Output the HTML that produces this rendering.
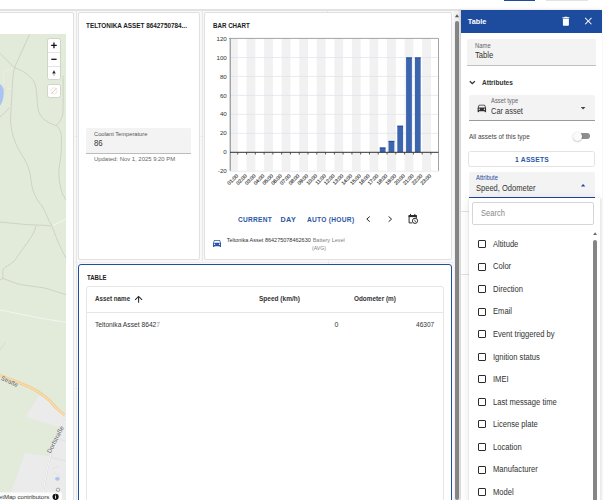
<!DOCTYPE html>
<html><head><meta charset="utf-8">
<style>
*{box-sizing:border-box;margin:0;padding:0}
html,body{width:603px;height:500px;overflow:hidden;background:#fff;font-family:"Liberation Sans",sans-serif;color:#222}
.a{position:absolute}
svg{font-family:"Liberation Sans",sans-serif}
#grid{left:0;top:9px;width:461px;height:491px;background:#f8f8f8;border-top:2px solid #e2e2e2}
.card{position:absolute;background:#fff;border:1px solid #e0e0e0;border-radius:2px}
.title{position:absolute;font-weight:bold;font-size:7px;color:#222;white-space:nowrap;transform-origin:0 0;transform:scaleX(.91);line-height:8px}
.t{position:absolute;white-space:nowrap;line-height:1}
.fld{position:absolute;background:#f3f3f3;border-bottom:1px solid #9a9a9a;border-radius:2px 2px 0 0}
.item{position:absolute;left:477.8px;width:8.1px;height:8.1px;border:1.4px solid #2b2b2b;border-radius:1px}
.itxt{position:absolute;left:493.3px;font-size:8.45px;transform-origin:0 0;transform:scaleX(.9);color:#333;white-space:nowrap;line-height:1}
</style></head><body>
<!-- top strip -->
<div class="a" style="left:504px;top:0;width:31px;height:1px;background:#1d4b9e"></div>
<div class="a" style="left:546px;top:0;width:41.5px;height:1px;background:#e3e3e3"></div>
<div class="a" id="grid"></div>
<!-- grid lines of editor -->
<div class="a" style="left:75.5px;top:11px;width:1px;height:489px;background:#e6e6e6"></div>
<div class="a" style="left:201.5px;top:11px;width:1px;height:250px;background:#e6e6e6"></div>
<div class="a" style="left:0;top:261.6px;width:454px;height:1px;background:#efefef"></div>
<div class="a" style="left:327.6px;top:259.5px;width:1px;height:5px;background:#ebebeb"></div>
<div class="a" style="left:327px;top:10.6px;width:1px;height:2px;background:#e2e2e2"></div>
<div class="a" style="left:73.5px;top:135.9px;width:5px;height:1px;background:#ebebeb"></div>
<div class="a" style="left:199.8px;top:135.9px;width:4.6px;height:1px;background:#ebebeb"></div>
<div class="a" style="left:73.5px;top:387.6px;width:5px;height:1px;background:#ebebeb"></div>

<!-- map card -->
<div class="card" style="left:-3px;top:12px;width:77px;height:492px"></div>
<div class="a" style="left:0;top:34px;width:66px;height:466px;background:#e2eada;overflow:hidden">
<svg width="66" height="466" viewBox="0 34 66 466" style="display:block">
<g fill="none" stroke="#c9cbc2" stroke-width="0.8" stroke-linecap="round" stroke-linejoin="round">
<path d="M29.7 34 L14.4 67.8"/>
<path d="M0 53.4 L14.4 67.8"/>
<path d="M14.4 67.8 C22 70 30 75 34.2 82 C37 88 37 100 37.6 106 C38.5 114 42 118.8 48 122 C51 124 54 125 56.5 125.5"/>
<path d="M63 76 C63.5 90 63 104 63 113 C62 119 59 123 56.5 125.5"/>
<path d="M14.4 67.8 C13 74 12.6 80 12.2 90 C11.6 100 10.8 110 10.5 120 C11 134 16 146 22 155 C27 163 30 170 31 180 C32 190 35 198 42 206 C46 212 48 220 52 226"/>
<path d="M56.5 125.5 C59 128 61 131 61.4 136 C61.6 145 61.5 155 59.5 165 C58 172 59 185 63 195 L66 200"/>
<path d="M0 117 C3 114 6 112 9 108"/>
<path d="M0 222 C12 223 26 225 37 225 C44 225 48 226 52 226"/>
<path d="M52 226 C55 234 59 246 66 258"/>
<path d="M36 226 C35 230 33 234 30.4 238.4 L14.4 260.8 C10 265 5 267 3.2 269 C2.5 272 3 276 3 278.4 L0 280"/>
<path d="M3 278.4 C10 281 16 284 22.4 284.8 C30 286 38 287 44.8 288 C52 290 60 293 66 294.6"/>
<path d="M0 350 L5 343" stroke="#d2d4cc" stroke-width="0.6"/>
</g>
<path d="M52 226 L66 219" stroke="#f4f6f0" stroke-width="1" fill="none"/>
<path d="M0 310 C12 312 24 315 35 317 C46 319 56 321 66 322" stroke="#f2f4ee" stroke-width="1.1" fill="none"/>
<!-- lake -->
<path d="M0 84 C3 86 4 89 3.8 93 C3.5 99 2 103 0 106 Z" fill="#a9c4f0"/>
<circle cx="5.4" cy="88.5" r="1.5" fill="#f0dcc0" opacity=".8"/>
<path d="M6 88.3 L11 88.3 M3.6 72.3 V84 M3.6 72.3 C8 70 11 69 14.4 67.8" stroke="#eef0ea" stroke-width="0.7" fill="none"/>
<!-- grey areas -->
<path d="M39 395 L55 405 L66 413 L66 421 L58 427 L25.5 417 Z" fill="#ebebeb"/>
<path d="M66 414 L66 500 L42 500 L44 488 L46 474 L49 460 L53 446 L57 434 L62 424 Z" fill="#ebebeb"/>
<path d="M25 453 L51 456.5 L49 470 L46 490 L45 500 L8 500 Z" fill="#ebebeb"/>
<!-- yellow road -->
<path d="M0 375.2 C8 378.5 20 383 30 387.3 C40 392 48 398 55 406.5 C59 410.5 62 413 66 416" stroke="#e6c58c" stroke-width="2.8" fill="none"/>
<path d="M0 375.2 C8 378.5 20 383 30 387.3 C40 392 48 398 55 406.5 C59 410.5 62 413 66 416" stroke="#fcdba2" stroke-width="1.8" fill="none"/>
<!-- dorfstrasse -->
<path d="M66 414 C62 424 57 434 53 446 C49 460 46 474 44 488 L42 500" stroke="#d6d6d6" stroke-width="1.6" fill="none"/>
<path d="M66 414 C62 424 57 434 53 446 C49 460 46 474 44 488 L42 500" stroke="#fafafa" stroke-width="0.9" fill="none"/>
<path d="M52 438 L66 441 M51 457.5 L66 461 M52 469 L59 466 M53 472 L60 477" stroke="#d8d8d8" stroke-width="0.5" fill="none"/>
<ellipse cx="57.4" cy="478.8" rx="2.3" ry="1.9" fill="#a9c4f0"/>
<text transform="translate(0.6,379.6) rotate(25)" font-size="5.9" fill="#555" stroke="#f4f2ea" stroke-width="0.9" paint-order="stroke" stroke-opacity=".6">Straße</text>
<text transform="translate(50.6,453.8) rotate(-63)" font-size="6.3" fill="#5c5c5c" stroke="#f4f4f4" stroke-width="0.9" paint-order="stroke" stroke-opacity=".7">Dorfstraße</text>
<circle cx="58" cy="489.8" r="1.7" fill="none" stroke="#888" stroke-width="0.7"/>
<rect x="0" y="492.4" width="62" height="7.6" fill="#fff" opacity=".85"/>
<text x="-1.2" y="499.3" font-size="6.1" fill="#333">etMap contributors</text>
<circle cx="55.6" cy="496.8" r="3.1" fill="#111"/>
<rect x="55.15" y="496" width="0.9" height="2.6" fill="#fff"/>
<rect x="55.15" y="494.6" width="0.9" height="0.9" fill="#fff"/>
</svg>

</div>
<!-- map controls -->
<div class="a" style="left:46.6px;top:38.3px;width:14.7px;height:41.5px;background:#fff;border:1px solid #cfd6c8;border-radius:2.5px"></div>
<div class="a" style="left:47.6px;top:52.3px;width:12.7px;height:0.6px;background:#e4e4e4"></div>
<div class="a" style="left:47.6px;top:66px;width:12.7px;height:0.6px;background:#e4e4e4"></div>
<div class="a" style="left:46.6px;top:83.8px;width:14.7px;height:14.2px;background:#fff;border:1px solid #cfd6c8;border-radius:2.5px"></div>
<svg class="a" style="left:0;top:0" width="603" height="500">
  <path d="M53.95 42.6 V48.2 M51.15 45.4 H56.75" stroke="#111" stroke-width="1.3"/>
  <path d="M51.3 59.3 H56.6" stroke="#111" stroke-width="1.3"/>
  <path d="M53.95 70.2 L52.2 73.6 H55.7 Z" fill="#222"/>
  <path d="M53.95 76.6 L52.6 74.2 H55.3 Z" fill="#bbb"/>
  <circle cx="54" cy="90.9" r="3.1" fill="none" stroke="#ddd" stroke-width="0.6"/>
  <path d="M51.6 93.6 L56.4 88.2" stroke="#f0b985" stroke-width="0.8"/>
</svg>

<!-- teltonika card -->
<div class="card" style="left:78.3px;top:12px;width:121.5px;height:247.5px"></div>
<div class="title" style="left:86.4px;top:22px">TELTONIKA ASSET 8642750784...</div>
<div class="fld" style="left:86.4px;top:127.6px;width:105px;height:26.2px;border-bottom:1.2px solid #bcbcbc"></div>
<div class="t" style="left:93.9px;top:131px;font-size:6px;transform-origin:0 0;transform:scaleX(0.954);color:#555">Coolant Temperature</div>
<div class="t" style="left:93.9px;top:140.3px;font-size:8.2px;transform-origin:0 0;transform:scaleX(0.956);color:#333">86</div>
<div class="t" style="left:93.9px;top:155.5px;font-size:6px;transform-origin:0 0;transform:scaleX(0.985);color:#666">Updated: Nov 1, 2025 9:20 PM</div>

<!-- bar chart card -->
<div class="card" style="left:204.3px;top:12px;width:247.4px;height:247.5px"></div>
<div class="title" style="left:212.8px;top:22px;transform:scaleX(.885)">BAR CHART</div>
<svg class="a" style="left:0;top:0" width="603" height="500" viewBox="0 0 603 500">
<rect x="230.70" y="38.40" width="7.08" height="132.40" fill="#f1f1f1"/>
<rect x="246.56" y="38.40" width="8.78" height="132.40" fill="#f1f1f1"/>
<rect x="264.12" y="38.40" width="8.78" height="132.40" fill="#f1f1f1"/>
<rect x="281.68" y="38.40" width="8.78" height="132.40" fill="#f1f1f1"/>
<rect x="299.24" y="38.40" width="8.78" height="132.40" fill="#f1f1f1"/>
<rect x="316.80" y="38.40" width="8.78" height="132.40" fill="#f1f1f1"/>
<rect x="334.36" y="38.40" width="8.78" height="132.40" fill="#f1f1f1"/>
<rect x="351.92" y="38.40" width="8.78" height="132.40" fill="#f1f1f1"/>
<rect x="369.48" y="38.40" width="8.78" height="132.40" fill="#f1f1f1"/>
<rect x="387.04" y="38.40" width="8.78" height="132.40" fill="#f1f1f1"/>
<rect x="404.60" y="38.40" width="8.78" height="132.40" fill="#f1f1f1"/>
<rect x="422.16" y="38.40" width="8.78" height="132.40" fill="#f1f1f1"/>
<line x1="230" x2="438.5" y1="171.26" y2="171.26" stroke="#dfe3ef" stroke-width="0.7"/>
<line x1="230" x2="438.5" y1="133.34" y2="133.34" stroke="#dfe3ef" stroke-width="0.7"/>
<line x1="230" x2="438.5" y1="114.38" y2="114.38" stroke="#dfe3ef" stroke-width="0.7"/>
<line x1="230" x2="438.5" y1="95.42" y2="95.42" stroke="#dfe3ef" stroke-width="0.7"/>
<line x1="230" x2="438.5" y1="76.46" y2="76.46" stroke="#dfe3ef" stroke-width="0.7"/>
<line x1="230" x2="438.5" y1="57.50" y2="57.50" stroke="#dfe3ef" stroke-width="0.7"/>
<rect x="379.75" y="147.56" width="5.8" height="4.74" fill="#3c65b0"/>
<rect x="379.75" y="147.56" width="5.8" height="0.9" fill="#23488f"/>
<rect x="388.53" y="140.92" width="5.8" height="11.38" fill="#3c65b0"/>
<rect x="388.53" y="140.92" width="5.8" height="0.9" fill="#23488f"/>
<rect x="397.31" y="125.76" width="5.8" height="26.54" fill="#3c65b0"/>
<rect x="397.31" y="125.76" width="5.8" height="0.9" fill="#23488f"/>
<rect x="406.09" y="57.50" width="5.8" height="94.80" fill="#3c65b0"/>
<rect x="406.09" y="57.50" width="5.8" height="0.9" fill="#23488f"/>
<rect x="414.87" y="57.50" width="5.8" height="94.80" fill="#3c65b0"/>
<rect x="414.87" y="57.50" width="5.8" height="0.9" fill="#23488f"/>
<line x1="229.0" x2="438.5" y1="38.4" y2="38.4" stroke="#9a9a9a" stroke-width="0.9"/>
<line x1="438.5" x2="438.5" y1="38.4" y2="170.8" stroke="#9a9a9a" stroke-width="0.9"/>
<line x1="230.2" x2="230.2" y1="38.4" y2="170.8" stroke="#7d7d7d" stroke-width="1"/>
<line x1="230" x2="438.5" y1="152.3" y2="152.3" stroke="#333" stroke-width="1"/>
<line x1="237.78" x2="237.78" y1="152.3" y2="154.50" stroke="#333" stroke-width="0.8"/>
<line x1="246.56" x2="246.56" y1="152.3" y2="154.50" stroke="#333" stroke-width="0.8"/>
<line x1="255.34" x2="255.34" y1="152.3" y2="154.50" stroke="#333" stroke-width="0.8"/>
<line x1="264.12" x2="264.12" y1="152.3" y2="154.50" stroke="#333" stroke-width="0.8"/>
<line x1="272.90" x2="272.90" y1="152.3" y2="154.50" stroke="#333" stroke-width="0.8"/>
<line x1="281.68" x2="281.68" y1="152.3" y2="154.50" stroke="#333" stroke-width="0.8"/>
<line x1="290.46" x2="290.46" y1="152.3" y2="154.50" stroke="#333" stroke-width="0.8"/>
<line x1="299.24" x2="299.24" y1="152.3" y2="154.50" stroke="#333" stroke-width="0.8"/>
<line x1="308.02" x2="308.02" y1="152.3" y2="154.50" stroke="#333" stroke-width="0.8"/>
<line x1="316.80" x2="316.80" y1="152.3" y2="154.50" stroke="#333" stroke-width="0.8"/>
<line x1="325.58" x2="325.58" y1="152.3" y2="154.50" stroke="#333" stroke-width="0.8"/>
<line x1="334.36" x2="334.36" y1="152.3" y2="154.50" stroke="#333" stroke-width="0.8"/>
<line x1="343.14" x2="343.14" y1="152.3" y2="154.50" stroke="#333" stroke-width="0.8"/>
<line x1="351.92" x2="351.92" y1="152.3" y2="154.50" stroke="#333" stroke-width="0.8"/>
<line x1="360.70" x2="360.70" y1="152.3" y2="154.50" stroke="#333" stroke-width="0.8"/>
<line x1="369.48" x2="369.48" y1="152.3" y2="154.50" stroke="#333" stroke-width="0.8"/>
<line x1="378.26" x2="378.26" y1="152.3" y2="154.50" stroke="#333" stroke-width="0.8"/>
<line x1="387.04" x2="387.04" y1="152.3" y2="154.50" stroke="#333" stroke-width="0.8"/>
<line x1="395.82" x2="395.82" y1="152.3" y2="154.50" stroke="#333" stroke-width="0.8"/>
<line x1="404.60" x2="404.60" y1="152.3" y2="154.50" stroke="#333" stroke-width="0.8"/>
<line x1="413.38" x2="413.38" y1="152.3" y2="154.50" stroke="#333" stroke-width="0.8"/>
<line x1="422.16" x2="422.16" y1="152.3" y2="154.50" stroke="#333" stroke-width="0.8"/>
<line x1="430.94" x2="430.94" y1="152.3" y2="154.50" stroke="#333" stroke-width="0.8"/>
<text x="226.8" y="173.36" text-anchor="end" font-size="6.2" fill="#333">-20</text>
<text x="226.8" y="154.40" text-anchor="end" font-size="6.2" fill="#333">0</text>
<text x="226.8" y="135.44" text-anchor="end" font-size="6.2" fill="#333">20</text>
<text x="226.8" y="116.48" text-anchor="end" font-size="6.2" fill="#333">40</text>
<text x="226.8" y="97.52" text-anchor="end" font-size="6.2" fill="#333">60</text>
<text x="226.8" y="78.56" text-anchor="end" font-size="6.2" fill="#333">80</text>
<text x="226.8" y="59.60" text-anchor="end" font-size="6.2" fill="#333">100</text>
<text x="226.8" y="40.64" text-anchor="end" font-size="6.2" fill="#333">120</text>
<text transform="translate(238.39,176.2) rotate(-45)" text-anchor="end" font-size="5.1" fill="#333" stroke="#333" stroke-width="0.14">01:00</text>
<text transform="translate(247.17,176.2) rotate(-45)" text-anchor="end" font-size="5.1" fill="#333" stroke="#333" stroke-width="0.14">02:00</text>
<text transform="translate(255.95,176.2) rotate(-45)" text-anchor="end" font-size="5.1" fill="#333" stroke="#333" stroke-width="0.14">03:00</text>
<text transform="translate(264.73,176.2) rotate(-45)" text-anchor="end" font-size="5.1" fill="#333" stroke="#333" stroke-width="0.14">04:00</text>
<text transform="translate(273.51,176.2) rotate(-45)" text-anchor="end" font-size="5.1" fill="#333" stroke="#333" stroke-width="0.14">05:00</text>
<text transform="translate(282.29,176.2) rotate(-45)" text-anchor="end" font-size="5.1" fill="#333" stroke="#333" stroke-width="0.14">06:00</text>
<text transform="translate(291.07,176.2) rotate(-45)" text-anchor="end" font-size="5.1" fill="#333" stroke="#333" stroke-width="0.14">07:00</text>
<text transform="translate(299.85,176.2) rotate(-45)" text-anchor="end" font-size="5.1" fill="#333" stroke="#333" stroke-width="0.14">08:00</text>
<text transform="translate(308.63,176.2) rotate(-45)" text-anchor="end" font-size="5.1" fill="#333" stroke="#333" stroke-width="0.14">09:00</text>
<text transform="translate(317.41,176.2) rotate(-45)" text-anchor="end" font-size="5.1" fill="#333" stroke="#333" stroke-width="0.14">10:00</text>
<text transform="translate(326.19,176.2) rotate(-45)" text-anchor="end" font-size="5.1" fill="#333" stroke="#333" stroke-width="0.14">11:00</text>
<text transform="translate(334.97,176.2) rotate(-45)" text-anchor="end" font-size="5.1" fill="#333" stroke="#333" stroke-width="0.14">12:00</text>
<text transform="translate(343.75,176.2) rotate(-45)" text-anchor="end" font-size="5.1" fill="#333" stroke="#333" stroke-width="0.14">13:00</text>
<text transform="translate(352.53,176.2) rotate(-45)" text-anchor="end" font-size="5.1" fill="#333" stroke="#333" stroke-width="0.14">14:00</text>
<text transform="translate(361.31,176.2) rotate(-45)" text-anchor="end" font-size="5.1" fill="#333" stroke="#333" stroke-width="0.14">15:00</text>
<text transform="translate(370.09,176.2) rotate(-45)" text-anchor="end" font-size="5.1" fill="#333" stroke="#333" stroke-width="0.14">16:00</text>
<text transform="translate(378.87,176.2) rotate(-45)" text-anchor="end" font-size="5.1" fill="#333" stroke="#333" stroke-width="0.14">17:00</text>
<text transform="translate(387.65,176.2) rotate(-45)" text-anchor="end" font-size="5.1" fill="#333" stroke="#333" stroke-width="0.14">18:00</text>
<text transform="translate(396.43,176.2) rotate(-45)" text-anchor="end" font-size="5.1" fill="#333" stroke="#333" stroke-width="0.14">19:00</text>
<text transform="translate(405.21,176.2) rotate(-45)" text-anchor="end" font-size="5.1" fill="#333" stroke="#333" stroke-width="0.14">20:00</text>
<text transform="translate(413.99,176.2) rotate(-45)" text-anchor="end" font-size="5.1" fill="#333" stroke="#333" stroke-width="0.14">21:00</text>
<text transform="translate(422.77,176.2) rotate(-45)" text-anchor="end" font-size="5.1" fill="#333" stroke="#333" stroke-width="0.14">22:00</text>
<text transform="translate(431.55,176.2) rotate(-45)" text-anchor="end" font-size="5.1" fill="#333" stroke="#333" stroke-width="0.14">23:00</text>
</svg>
<div class="t" style="left:237.5px;top:215.6px;font-size:7.2px;font-weight:bold;color:#2a56a6;letter-spacing:.3px;transform-origin:0 0;transform:scaleX(.915)">CURRENT</div>
<div class="t" style="left:280.6px;top:215.6px;font-size:7.2px;font-weight:bold;color:#2a56a6;letter-spacing:.3px">DAY</div>
<div class="t" style="left:306.9px;top:215.6px;font-size:7.2px;font-weight:bold;color:#2a56a6;letter-spacing:.3px;transform-origin:0 0;transform:scaleX(.92)">AUTO (HOUR)</div>
<svg class="a" style="left:0;top:0" width="603" height="500">
  <path d="M369.8 216.5 L366.8 219.1 L369.8 221.7" fill="none" stroke="#2b2b2b" stroke-width="1"/>
  <path d="M388.6 216.5 L391.6 219.1 L388.6 221.7" fill="none" stroke="#2b2b2b" stroke-width="1"/>
  <!-- calendar clock -->
  <path d="M412.3 222.9 H409.1 V215.6 H416.3 V218" fill="none" stroke="#2b2b2b" stroke-width="1"/>
  <rect x="408.6" y="215.1" width="8.2" height="2" fill="#2b2b2b"/>
  <rect x="410" y="213.9" width="1" height="1.6" fill="#2b2b2b"/>
  <rect x="414.3" y="213.9" width="1" height="1.6" fill="#2b2b2b"/>
  <circle cx="415" cy="220.8" r="2.6" fill="#fff" stroke="#2b2b2b" stroke-width="1"/>
  <path d="M414.8 219.6 V221 L416 221.8" fill="none" stroke="#2b2b2b" stroke-width="0.7"/>
  <!-- legend car -->
  <path transform="translate(211.7,237.8) scale(0.444)" d="M18.92 6.01C18.72 5.42 18.16 5 17.5 5h-11c-.66 0-1.21.42-1.42 1.01L3 12v8c0 .55.45 1 1 1h1c.55 0 1-.45 1-1v-1h12v1c0 .55.45 1 1 1h1c.55 0 1-.45 1-1v-8l-2.08-5.99zM6.5 16c-.83 0-1.5-.67-1.5-1.5S5.67 13 6.5 13s1.5.67 1.5 1.5S7.33 16 6.5 16zm11 0c-.83 0-1.5-.67-1.5-1.5s.67-1.5 1.5-1.5 1.5.67 1.5 1.5-.67 1.5-1.5 1.5zM5 11l1.5-4.5h11L19 11H5z" fill="#2a56a6"/>
</svg>
<div class="t" style="left:226.7px;top:238.1px;font-size:5.5px;color:#333">Teltonika Asset 864275078462630</div>
<div class="t" style="left:312.7px;top:238.1px;font-size:5.5px;color:#808080">Battery Level</div>
<div class="t" style="left:312px;top:246.2px;font-size:5.2px;color:#808080">(AVG)</div>

<!-- table card -->
<div class="card" style="left:78.4px;top:264.4px;width:373.6px;height:250px;border:1px solid #1f4d9f;border-radius:3px"></div>
<div class="title" style="left:86.6px;top:274px;transform:scaleX(.86)">TABLE</div>
<div class="a" style="left:86.3px;top:285.8px;width:357.5px;height:230px;border:1px solid #e6e6e6;border-radius:3px;background:#fff"></div>
<div class="a" style="left:86.8px;top:312px;width:356.5px;height:1px;background:#e6e6e6"></div>
<div class="t" style="left:94.6px;top:295.8px;font-size:6.6px;font-weight:bold;transform-origin:0 0;transform:scaleX(0.949);color:#333">Asset name</div>
<svg class="a" style="left:0;top:0" width="603" height="500">
  <path d="M138.6 302.8 V296.8 M135.1 299.9 L138.6 296.4 L142.1 299.9" fill="none" stroke="#2a2a2a" stroke-width="1.05"/>
</svg>
<div class="t" style="left:258.8px;top:295.8px;font-size:6.6px;font-weight:bold;transform-origin:0 0;transform:scaleX(0.988);color:#333">Speed (km/h)</div>
<div class="t" style="left:353.7px;top:295.8px;font-size:6.6px;font-weight:bold;transform-origin:0 0;transform:scaleX(0.967);color:#333">Odometer (m)</div>
<div class="t" style="left:94.6px;top:321px;font-size:7px;transform-origin:0 0;transform:scaleX(0.955);color:#333">Teltonika Asset 8642<span style="color:#999">7</span></div>
<div class="t" style="left:334.6px;top:321px;font-size:7px;color:#333">0</div>
<div class="t" style="left:416.3px;top:321px;font-size:7px;transform-origin:0 0;transform:scaleX(0.935);color:#333">46307</div>

<!-- page scrollbar -->
<div class="a" style="left:453.5px;top:11px;width:7.5px;height:489px;background:#f1f1f1"></div>
<svg class="a" style="left:0;top:0" width="603" height="500"><path d="M455 17.3 L457 14.3 L459 17.3 Z" fill="#555"/></svg>
<div class="a" style="left:455.2px;top:21px;width:3.6px;height:479px;background:#858585;border-radius:2px"></div>

<!-- right panel -->
<div class="a" style="left:461px;top:10px;width:141px;height:490px;background:#fff;box-shadow:-1px 0 3px rgba(0,0,0,.18)"></div>
<div class="a" style="left:461px;top:10.3px;width:141px;height:22.4px;background:#1d4b9e"></div>
<div class="t" style="left:467.8px;top:18.2px;font-size:7.3px;font-weight:bold;color:#fff">Table</div>
<svg class="a" style="left:0;top:0" width="603" height="500">
  <path transform="translate(559.9,15.2) scale(0.5)" d="M6 19c0 1.1.9 2 2 2h8c1.1 0 2-.9 2-2V7H6v12zM19 4h-3.5l-1-1h-5l-1 1H5v2h14V4z" fill="#fff"/>
  <path transform="translate(582.3,15.1) scale(0.5)" d="M19 6.41L17.59 5 12 10.59 6.41 5 5 6.41 10.59 12 5 17.59 6.41 19 12 13.41 17.59 19 19 17.59 13.41 12z" fill="#fff"/>
</svg>
<!-- name field -->
<div class="fld" style="left:467px;top:38.8px;width:129px;height:26.8px;border-bottom:1.8px solid #c0c0c0"></div>
<div class="t" style="left:474.5px;top:42.9px;font-size:6.4px;transform-origin:0 0;transform:scaleX(0.92);color:#666">Name</div>
<div class="t" style="left:474.5px;top:51.2px;font-size:8.8px;transform-origin:0 0;transform:scaleX(0.87);color:#333">Table</div>
<!-- attributes header -->
<svg class="a" style="left:0;top:0" width="603" height="500">
  <path d="M469.8 81.2 L472.3 83.7 L474.8 81.2" fill="none" stroke="#333" stroke-width="1.3"/>
</svg>
<div class="t" style="left:482.2px;top:79.2px;font-size:7px;font-weight:bold;transform-origin:0 0;transform:scaleX(0.933);color:#333">Attributes</div>
<!-- asset type field -->
<div class="fld" style="left:469px;top:94.5px;width:125.8px;height:26.3px"></div>
<svg class="a" style="left:0;top:0" width="603" height="500">
  <path transform="translate(476.2,102.4) scale(0.47)" d="M18.92 6.01C18.72 5.42 18.16 5 17.5 5h-11c-.66 0-1.21.42-1.42 1.01L3 12v8c0 .55.45 1 1 1h1c.55 0 1-.45 1-1v-1h12v1c0 .55.45 1 1 1h1c.55 0 1-.45 1-1v-8l-2.08-5.99zM6.5 16c-.83 0-1.5-.67-1.5-1.5S5.67 13 6.5 13s1.5.67 1.5 1.5S7.33 16 6.5 16zm11 0c-.83 0-1.5-.67-1.5-1.5s.67-1.5 1.5-1.5 1.5.67 1.5 1.5-.67 1.5-1.5 1.5zM5 11l1.5-4.5h11L19 11H5z" fill="#333"/>
  <path d="M580.8 107 H585.4 L583.1 109.5 Z" fill="#444"/>
</svg>
<div class="t" style="left:491px;top:98.2px;font-size:6.4px;transform-origin:0 0;transform:scaleX(0.91);color:#666">Asset type</div>
<div class="t" style="left:491px;top:106.7px;font-size:8.7px;transform-origin:0 0;transform:scaleX(0.857);color:#333">Car asset</div>
<!-- toggle -->
<div class="t" style="left:469px;top:134.1px;font-size:6.6px;transform-origin:0 0;transform:scaleX(0.981);color:#444">All assets of this type</div>
<div class="a" style="left:575.8px;top:133.4px;width:14px;height:6px;border-radius:3px;background:#8d8d8d"></div>
<div class="a" style="left:573px;top:132.2px;width:8.6px;height:8.6px;border-radius:50%;background:#fafafa;box-shadow:0 .5px 1.5px rgba(0,0,0,.35)"></div>
<!-- assets button -->
<div class="a" style="left:467.8px;top:150.6px;width:127px;height:16.9px;border:1px solid #e3e3e3;border-radius:2.5px"></div>
<div class="t" style="left:515px;top:157px;font-size:6.7px;font-weight:bold;color:#2a56a6;letter-spacing:.25px">1 ASSETS</div>
<!-- attribute field -->
<div class="fld" style="left:469px;top:172px;width:125.8px;height:26px;border-bottom:1.4px solid #1d4b9e"></div>
<div class="t" style="left:476.4px;top:175.2px;font-size:6.4px;transform-origin:0 0;transform:scaleX(.92);color:#1d4b9e">Attribute</div>
<div class="t" style="left:476.4px;top:184px;font-size:8.4px;transform-origin:0 0;transform:scaleX(0.9);color:#333">Speed, Odometer</div>
<svg class="a" style="left:0;top:0" width="603" height="500"><path d="M580.9 186.6 H585.3 L583.1 184 Z" fill="#1d4b9e"/></svg>
<div class="a" style="left:461px;top:210.5px;width:8px;height:1px;background:#e2e2e2"></div>
<div class="a" style="left:461px;top:274px;width:8px;height:1px;background:#e2e2e2"></div>
<!-- dropdown -->
<div class="a" style="left:469px;top:197.6px;width:130.5px;height:310px;background:#fff;box-shadow:0 0 1px rgba(0,0,0,.25),0 2px 9px rgba(0,0,0,.10)"></div>
<div class="a" style="left:472.4px;top:201.6px;width:122px;height:23.2px;border:1px solid #d6d6d6;border-radius:2px"></div>
<div class="t" style="left:480.6px;top:209.6px;font-size:8.2px;transform-origin:0 0;transform:scaleX(.92);color:#888">Search</div>
<svg class="a" style="left:0;top:0" width="603" height="500"><path d="M593.2 235 L595.1 232.2 L597 235 Z" fill="#666"/></svg>
<div class="a" style="left:593.2px;top:239.8px;width:3.8px;height:270px;background:#858585;border-radius:2px"></div>
<div class="item" style="top:240.00px"></div><div class="itxt" style="top:239.80px">Altitude</div>
<div class="item" style="top:262.55px"></div><div class="itxt" style="top:262.35px">Color</div>
<div class="item" style="top:285.10px"></div><div class="itxt" style="top:284.90px">Direction</div>
<div class="item" style="top:307.65px"></div><div class="itxt" style="top:307.45px">Email</div>
<div class="item" style="top:330.20px"></div><div class="itxt" style="top:330.00px">Event triggered by</div>
<div class="item" style="top:352.75px"></div><div class="itxt" style="top:352.55px">Ignition status</div>
<div class="item" style="top:375.30px"></div><div class="itxt" style="top:375.10px">IMEI</div>
<div class="item" style="top:397.85px"></div><div class="itxt" style="top:397.65px">Last message time</div>
<div class="item" style="top:420.40px"></div><div class="itxt" style="top:420.20px">License plate</div>
<div class="item" style="top:442.95px"></div><div class="itxt" style="top:442.75px">Location</div>
<div class="item" style="top:465.50px"></div><div class="itxt" style="top:465.30px">Manufacturer</div>
<div class="item" style="top:488.05px"></div><div class="itxt" style="top:487.85px">Model</div>
<div class="a" style="left:599.5px;top:199px;width:3.5px;height:301px;background:linear-gradient(to right,#e6e6e6,#f3f3f3 60%,#f6f6f6)"></div>
</body></html>
